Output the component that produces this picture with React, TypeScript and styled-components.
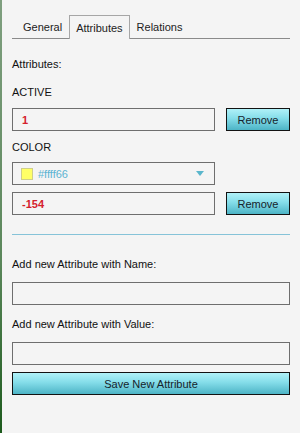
import React from 'react';
import styled, { createGlobalStyle } from 'styled-components';

const GlobalStyle = createGlobalStyle`
  html, body {
    margin: 0;
    padding: 0;
    height: 100%;
    background: #f4f4f4;
  }
  #root {
    height: 100%;
  }
  * {
    box-sizing: border-box;
  }
`;

const Panel = styled.div`
  height: 100%;
  min-height: 433px;
  width: 300px;
  padding: 15px 10px 0 10px;
  background: #f4f4f4;
  border-left: 2px solid;
  border-image: linear-gradient(#7f9f7f, #5b875b 60%, #1c5a1c) 1;
  font-family: 'Liberation Sans', Arial, sans-serif;
  font-size: 11px;
  color: #111;
  display: flex;
  flex-direction: column;
`;

const TabBar = styled.div`
  display: flex;
  height: 24px;
  padding-left: 4px;
  border-bottom: 1px solid #8a8a8a;
`;

const Tab = styled.div<{ $active?: boolean }>`
  height: 24px;
  padding: 0 6px;
  display: flex;
  align-items: center;
  color: #222;
  border: 1px solid ${(p) => (p.$active ? '#a6a6a6' : 'transparent')};
  border-bottom: none;
  background: #f4f4f4;
  margin-bottom: ${(p) => (p.$active ? '-1px' : '0')};
  height: ${(p) => (p.$active ? '24px' : '23px')};
`;

const Label = styled.div<{ $mt: number }>`
  line-height: 14px;
  margin-top: ${(p) => p.$mt}px;
`;

const Row = styled.div<{ $mt: number }>`
  display: flex;
  gap: 11px;
  margin-top: ${(p) => p.$mt}px;
`;

const Field = styled.div<{ $wide?: boolean }>`
  width: ${(p) => (p.$wide ? '278px' : '203px')};
  height: 23px;
  border: 1px solid #6e6e6e;
  padding-left: 9px;
  display: flex;
  align-items: center;
  color: #d4202c;
  font-weight: bold;
`;

const SelectBox = styled.div`
  width: 203px;
  height: 23px;
  border: 1px solid #6e6e6e;
  padding: 0 9px 0 8px;
  display: flex;
  align-items: center;
  color: #5bb3d2;
`;

const Swatch = styled.span<{ $color: string }>`
  width: 12px;
  height: 12px;
  background: ${(p) => p.$color};
  border: 1px solid #cfcf8a;
  margin-right: 5px;
`;

const Caret = styled.span`
  margin-left: auto;
  width: 0;
  height: 0;
  border-left: 4px solid transparent;
  border-right: 4px solid transparent;
  border-top: 5px solid #5ab6cc;
  margin-right: 1px;
`;

const Button = styled.button<{ $wide?: boolean }>`
  width: ${(p) => (p.$wide ? '278px' : '64px')};
  height: 23px;
  padding: 0;
  border: 1px solid #121212;
  background: linear-gradient(#b0f1f8, #84dde9 45%, #4db4c6);
  font-family: 'Liberation Sans', Arial, sans-serif;
  font-size: 11px;
  color: #16232b;
  cursor: pointer;
`;

const Divider = styled.div`
  height: 1px;
  background: #86c3d8;
  margin-top: 19px;
`;

const SaveButton = styled(Button)`
  margin-top: 7px;
`;

export default function App() {
  return (
    <>
      <GlobalStyle />
      <Panel>
        <TabBar>
          <Tab>General</Tab>
          <Tab $active>Attributes</Tab>
          <Tab>Relations</Tab>
        </TabBar>
        <Label $mt={18}>Attributes:</Label>
        <Label $mt={14}>ACTIVE</Label>
        <Row $mt={9}>
          <Field>1</Field>
          <Button>Remove</Button>
        </Row>
        <Label $mt={9}>COLOR</Label>
        <Row $mt={8}>
          <SelectBox>
            <Swatch $color="#ffff66" />
            #ffff66
            <Caret />
          </SelectBox>
        </Row>
        <Row $mt={7}>
          <Field>-154</Field>
          <Button>Remove</Button>
        </Row>
        <Divider />
        <Label $mt={22}>Add new Attribute with Name:</Label>
        <Row $mt={11}>
          <Field $wide />
        </Row>
        <Label $mt={12}>Add new Attribute with Value:</Label>
        <Row $mt={11}>
          <Field $wide />
        </Row>
        <SaveButton $wide>Save New Attribute</SaveButton>
      </Panel>
    </>
  );
}
